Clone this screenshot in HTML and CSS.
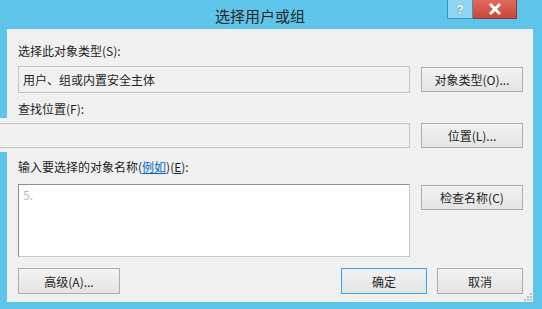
FILE: index.html
```html
<!DOCTYPE html>
<html lang="zh-CN">
<head>
  <meta charset="UTF-8">
  <title>选择用户或组</title>
  <link rel="stylesheet" href="styles.css">
</head>
<body>
  <div class="window">
    <div class="titlebar">
      <span class="title">选择用户或组</span>
      <div class="caption">
        <span class="cap-btn help">?</span>
        <span class="cap-btn close">
          <svg width="14" height="12" viewBox="0 0 14 12"><path d="M2 1 L12 11 M12 1 L2 11" stroke="#fff" stroke-width="3"/></svg>
        </span>
      </div>
    </div>

    <div class="client">
      <div class="label first">选择此对象类型(S):</div>
      <div class="row">
        <div class="field readonly">用户、组或内置安全主体</div>
        <button class="btn side">对象类型(O)...</button>
      </div>

      <div class="label">查找位置(F):</div>
      <div class="row location">
        <div class="field wide readonly"></div>
        <button class="btn side">位置(L)...</button>
      </div>

      <div class="label third">输入要选择的对象名称(<a href="#">例如</a>)(<u>E</u>):</div>
      <div class="row names">
        <div class="field memo">5.</div>
        <button class="btn side">检查名称(C)</button>
      </div>

      <div class="footer">
        <button class="btn">高级(A)...</button>
        <div class="actions">
          <button class="btn default">确定</button>
          <button class="btn">取消</button>
        </div>
      </div>
      <svg class="grip" width="8" height="8" viewBox="0 0 8 8">
        <rect x="6" y="0" width="2" height="2" fill="#bdbdbd"/>
        <rect x="3" y="3" width="2" height="2" fill="#bdbdbd"/>
        <rect x="6" y="3" width="2" height="2" fill="#bdbdbd"/>
        <rect x="0" y="6" width="2" height="2" fill="#bdbdbd"/>
        <rect x="3" y="6" width="2" height="2" fill="#bdbdbd"/>
        <rect x="6" y="6" width="2" height="2" fill="#bdbdbd"/>
      </svg>
    </div>
  </div>
</body>
</html>
```

FILE: styles.css
```css
body {
  margin: 0;
  font-family: "Noto Sans CJK SC", "Liberation Sans", sans-serif;
  font-size: 12px;
  color: #1e1e1e;
}

.window {
  width: 542px;
  height: 309px;
  background: #5ec4e9;
  display: flex;
  flex-direction: column;
  overflow: hidden;
}

.titlebar {
  height: 29px;
  position: relative;
  display: flex;
  justify-content: center;
  align-items: center;
}

.title {
  font-size: 15px;
  color: #262626;
  margin-left: -22px;
  margin-top: 1px;
}

.caption {
  position: absolute;
  top: 0;
  left: 447px;
  display: flex;
}

.cap-btn {
  height: 19px;
  display: flex;
  align-items: center;
  justify-content: center;
  box-sizing: border-box;
}

.help {
  width: 26px;
  background: #8ed6f1;
  border: 1px solid #3e93bd;
  border-top: none;
  color: #fff;
  font-weight: bold;
  font-size: 13px;
  font-family: "Liberation Sans", sans-serif;
  text-shadow: 0 0 1px #333;
}

.close {
  width: 44px;
  background: linear-gradient(#e06a5c, #c9463a);
  border: 1px solid #8c3a32;
  border-top: none;
  border-left: none;
}

.client {
  position: relative;
  flex: 1;
  margin: 0 9px 7px 7px;
  padding: 14px 10px 0 11px;
  background: #f0f0f0;
}

.label {
  height: 16px;
  line-height: 16px;
  margin-top: 8px;
  margin-bottom: 7px;
}

.label.first {
  margin-top: 0;
}

.label.third {
  margin-top: 7px;
  margin-bottom: 9px;
}

.label a {
  color: #0066cc;
}

.row {
  display: flex;
  justify-content: space-between;
  align-items: flex-start;
}

.field {
  width: 392px;
  height: 27px;
  box-sizing: border-box;
  border: 1px solid #c4c4c4;
  padding: 0 4px;
  line-height: 25px;
}

.readonly {
  background: #f0f0f0;
}

.location {
  margin: -6px 0 0 -18px;
  padding: 5px 0 4px 0;
  background: #f0f0f0;
}

.field.wide {
  width: 410px;
  height: 25px;
  border-left: none;
}

.names .field {
  height: 73px;
  background: #fff;
  border-color: #8d8d8d #c8c8c8 #c8c8c8 #8d8d8d;
  line-height: 18px;
  padding-top: 1px;
  color: #b9b9b9;
}

.btn {
  width: 102px;
  height: 26px;
  padding: 0;
  font-family: inherit;
  font-size: 12px;
  color: #1e1e1e;
  background: linear-gradient(#f2f2f2, #e4e4e4);
  border: 1px solid #acacac;
  border-radius: 0;
}

.btn.side {
  margin-top: 1px;
  height: 25px;
}

.location .btn.side {
  margin-top: 0;
}

.footer {
  display: flex;
  justify-content: space-between;
  margin-top: 11px;
}

.actions {
  display: flex;
  gap: 10px;
}

.actions .btn {
  width: 86px;
}

.btn.default {
  border: 1px solid #4aa3df;
  box-shadow: inset 0 0 0 1px #d6ecfa;
}

.grip {
  position: absolute;
  right: 1px;
  bottom: 1px;
}
```
